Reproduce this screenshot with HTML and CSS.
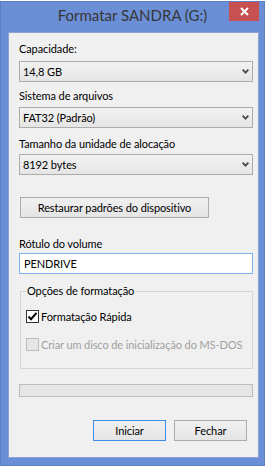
FILE: index.html
```html
<!DOCTYPE html>
<html lang="pt-BR">
<head>
  <meta charset="UTF-8" />
  <title>Formatar SANDRA (G:)</title>
  <link rel="stylesheet" href="styles.css">
</head>
<body>
  <div class="window">
    <div class="titlebar">
      <span class="title">Formatar SANDRA (G:)</span>
      <span class="close-btn">
        <svg width="9" height="9" viewBox="0 0 9 9"><path d="M1 1 L8 8 M8 1 L1 8" stroke="#fff" stroke-width="2" fill="none"/></svg>
      </span>
    </div>

    <div class="client">
      <div class="label first">Capacidade:</div>
      <div class="combo c1">
        <span>14,8 GB</span>
        <svg class="arrow" width="7" height="5" viewBox="0 0 7 5"><path d="M0.6 0.6 L3.5 3.6 L6.4 0.6" stroke="#4a4a4a" stroke-width="1.8" fill="none"/></svg>
      </div>

      <div class="label l2">Sistema de arquivos</div>
      <div class="combo c2">
        <span>FAT32 (Padrão)</span>
        <svg class="arrow" width="7" height="5" viewBox="0 0 7 5"><path d="M0.6 0.6 L3.5 3.6 L6.4 0.6" stroke="#4a4a4a" stroke-width="1.8" fill="none"/></svg>
      </div>

      <div class="label l3">Tamanho da unidade de alocação</div>
      <div class="combo c3">
        <span>8192 bytes</span>
        <svg class="arrow" width="7" height="5" viewBox="0 0 7 5"><path d="M0.6 0.6 L3.5 3.6 L6.4 0.6" stroke="#4a4a4a" stroke-width="1.8" fill="none"/></svg>
      </div>

      <button class="btn restore">Restaurar padrões do dispositivo</button>

      <div class="label l4">Rótulo do volume</div>
      <div class="textbox">PENDRIVE</div>

      <fieldset class="group">
        <legend>Opções de formatação</legend>
        <div class="check first-check">
          <span class="box">
            <svg width="11" height="11" viewBox="0 0 11 11"><path d="M1.5 5.5 L4 8.2 L9.5 1.8" stroke="#000" stroke-width="2" fill="none"/></svg>
          </span>
          Formatação Rápida
        </div>
        <div class="check disabled">
          <span class="box"></span>
          Criar um disco de inicialização do MS-DOS
        </div>
      </fieldset>

      <div class="progress"></div>

      <div class="actions">
        <button class="btn default">Iniciar</button>
        <button class="btn">Fechar</button>
      </div>
    </div>
  </div>
</body>
</html>
```

FILE: styles.css
```css
body {
  margin: 0;
  background-color: #ffffff;
  font-family: Lato, "Noto Sans", sans-serif;
  font-size: 11px;
  letter-spacing: -0.1px;
  color: #000;
}

.window {
  margin-top: 1px;
  width: 265px;
  height: 465px;
  box-sizing: border-box;
  background-color: #6b8fd6;
  border: 1px solid #5c7fc6;
  display: flex;
  flex-direction: column;
}

.titlebar {
  position: relative;
  height: 30px;
  display: flex;
  justify-content: center;
  align-items: flex-start;
}

.title {
  padding-top: 3px;
  font-size: 15px;
  line-height: 20px;
  letter-spacing: 0;
  color: #363636;
}

.close-btn {
  position: absolute;
  top: 0;
  right: 5px;
  width: 30px;
  height: 19px;
  background-color: #c75050;
  display: flex;
  align-items: center;
  justify-content: center;
}

.client {
  margin: 0 5px 0 7px;
  height: 426px;
  box-sizing: border-box;
  background-color: #f0f0f0;
  border: 1px solid #8aa3d2;
  padding: 0 5px 0 10px;
  display: flex;
  flex-direction: column;
  align-items: flex-start;
}

.label {
  line-height: 16px;
  height: 16px;
  white-space: nowrap;
}

.label.first { margin-top: 8px; }
.label.l2 { margin-top: 6px; }
.label.l3 { margin-top: 8px; }
.label.l4 { margin-top: 18px; }

.combo {
  align-self: stretch;
  height: 21px;
  box-sizing: border-box;
  border: 1px solid #acacac;
  background: linear-gradient(#f2f2f2, #e5e5e5);
  display: flex;
  align-items: center;
  justify-content: space-between;
  padding: 0 3px 0 3px;
  line-height: 16px;
}

.combo.c1 { margin-top: 4px; }
.combo.c2 { margin-top: 3px; }
.combo.c3 { margin-top: 2px; }

.btn {
  height: 21px;
  box-sizing: border-box;
  border: 1px solid #acacac;
  background: linear-gradient(#f0f0f0, #e5e5e5);
  font-family: Lato, "Noto Sans", sans-serif;
  font-size: 11px;
  letter-spacing: -0.1px;
  line-height: 16px;
  color: #000;
  padding: 0;
  border-radius: 0;
}

.btn.restore {
  margin: 22px 0 0 1px;
  width: 189px;
}

.textbox {
  margin-top: 1px;
  align-self: stretch;
  height: 21px;
  box-sizing: border-box;
  border: 1px solid #7eb4ea;
  background-color: #fff;
  padding: 0 4px;
  line-height: 19px;
}

.group {
  margin: 9px 0 0 1px;
  align-self: stretch;
  border: 1px solid #d5d5d5;
  padding: 0 0 15px 5px;
  min-width: 0;
}

.group legend {
  padding: 0 1px;
  line-height: 16px;
}

.check {
  display: flex;
  align-items: center;
  height: 17px;
  line-height: 16px;
  white-space: nowrap;
}

.check.first-check { margin-top: 9px; }
.check.disabled { margin-top: 11px; color: #a0a0a0; }

.box {
  flex-shrink: 0;
  width: 13px;
  height: 13px;
  box-sizing: border-box;
  border: 1px solid #333;
  background-color: #fff;
  margin-right: 2px;
  display: flex;
  align-items: center;
  justify-content: center;
}

.check.disabled .box {
  border-color: #bcbcbc;
  background-color: #e6e6e6;
}

.progress {
  margin-top: 15px;
  align-self: stretch;
  height: 13px;
  box-sizing: border-box;
  border: 1px solid #bcbcbc;
  background-color: #e6e6e6;
}

.actions {
  margin-top: 23px;
  align-self: stretch;
  display: flex;
  justify-content: flex-end;
  gap: 8px;
  padding-right: 6px;
}

.actions .btn {
  width: 73px;
}

.btn.default {
  border-color: #3c8ee6;
}
```
